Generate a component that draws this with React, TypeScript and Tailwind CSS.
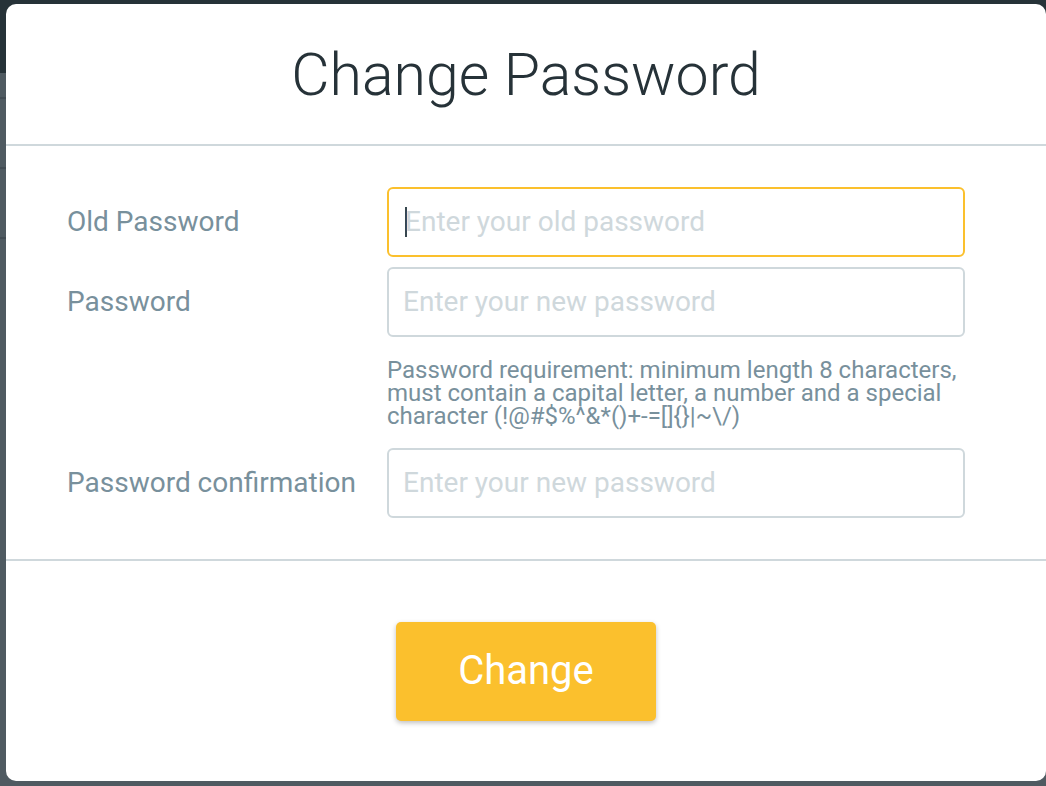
import React from "react";

export default function App() {
  return (
    <div className="relative w-[1046px] h-[786px] overflow-hidden font-['Roboto',sans-serif]">
      {/* page behind the overlay */}
      <div className="flex flex-col w-full h-full">
        <div className="h-[73px] bg-[#263238]" />
        <div className="flex-1 flex flex-col bg-[#4f5a61]">
          <div className="h-[26px] border-b-2 border-[#434d54]" />
          <div className="h-[70px] border-b-2 border-[#434d54]" />
          <div className="h-[70px] border-b-2 border-[#434d54]" />
        </div>
      </div>

      {/* modal */}
      <div className="absolute left-[6px] top-[4px] w-[1040px] h-[777px] bg-white rounded-[10px] flex flex-col">
        <div className="h-[142px] flex items-center justify-center border-b-2 border-[#cfd8dc]">
          <h1 className="text-[59px] font-light text-[#263238] leading-none">Change Password</h1>
        </div>

        <div className="flex flex-col pt-[41px] pb-[41px] pl-[61px] pr-[81px] border-b-2 border-[#cfd8dc]">
          <div className="flex items-center">
            <label className="w-[320px] text-[28px] text-[#78909c] leading-none">Old Password</label>
            <div className="flex-1 h-[70px] border-2 border-[#fbc02d] rounded-[6px] flex items-center pl-[16px]">
              <span className="w-[2px] h-[30px] bg-[#37474f] -mr-[2px]" />
              <span className="text-[28px] text-[#cfd8dc] leading-none">Enter your old password</span>
            </div>
          </div>

          <div className="flex items-start mt-[10px]">
            <label className="w-[320px] h-[70px] flex items-center text-[28px] text-[#78909c] leading-none">Password</label>
            <div className="flex-1 flex flex-col">
              <div className="h-[70px] border-2 border-[#cfd8dc] rounded-[6px] flex items-center pl-[14px]">
                <span className="text-[28px] text-[#cfd8dc] leading-none">Enter your new password</span>
              </div>
              <p className="mt-[22px] text-[24px] leading-[23px] text-[#78909c]">
                Password requirement: minimum length 8 characters, must contain a capital letter, a number and a special character (!@#$%^&amp;*()+-=[]{"{}"}|~\/)
              </p>
            </div>
          </div>

          <div className="flex items-center mt-[20px]">
            <label className="w-[320px] text-[28px] text-[#78909c] leading-none">Password confirmation</label>
            <div className="flex-1 h-[70px] border-2 border-[#cfd8dc] rounded-[6px] flex items-center pl-[14px]">
              <span className="text-[28px] text-[#cfd8dc] leading-none">Enter your new password</span>
            </div>
          </div>
        </div>

        <div className="flex-1 flex items-center justify-center">
          <button className="w-[260px] h-[99px] bg-[#fbc02d] rounded-[5px] shadow-[0_2px_5px_rgba(0,0,0,0.25)] text-white text-[40px] leading-none">
            Change
          </button>
        </div>
      </div>
    </div>
  );
}
